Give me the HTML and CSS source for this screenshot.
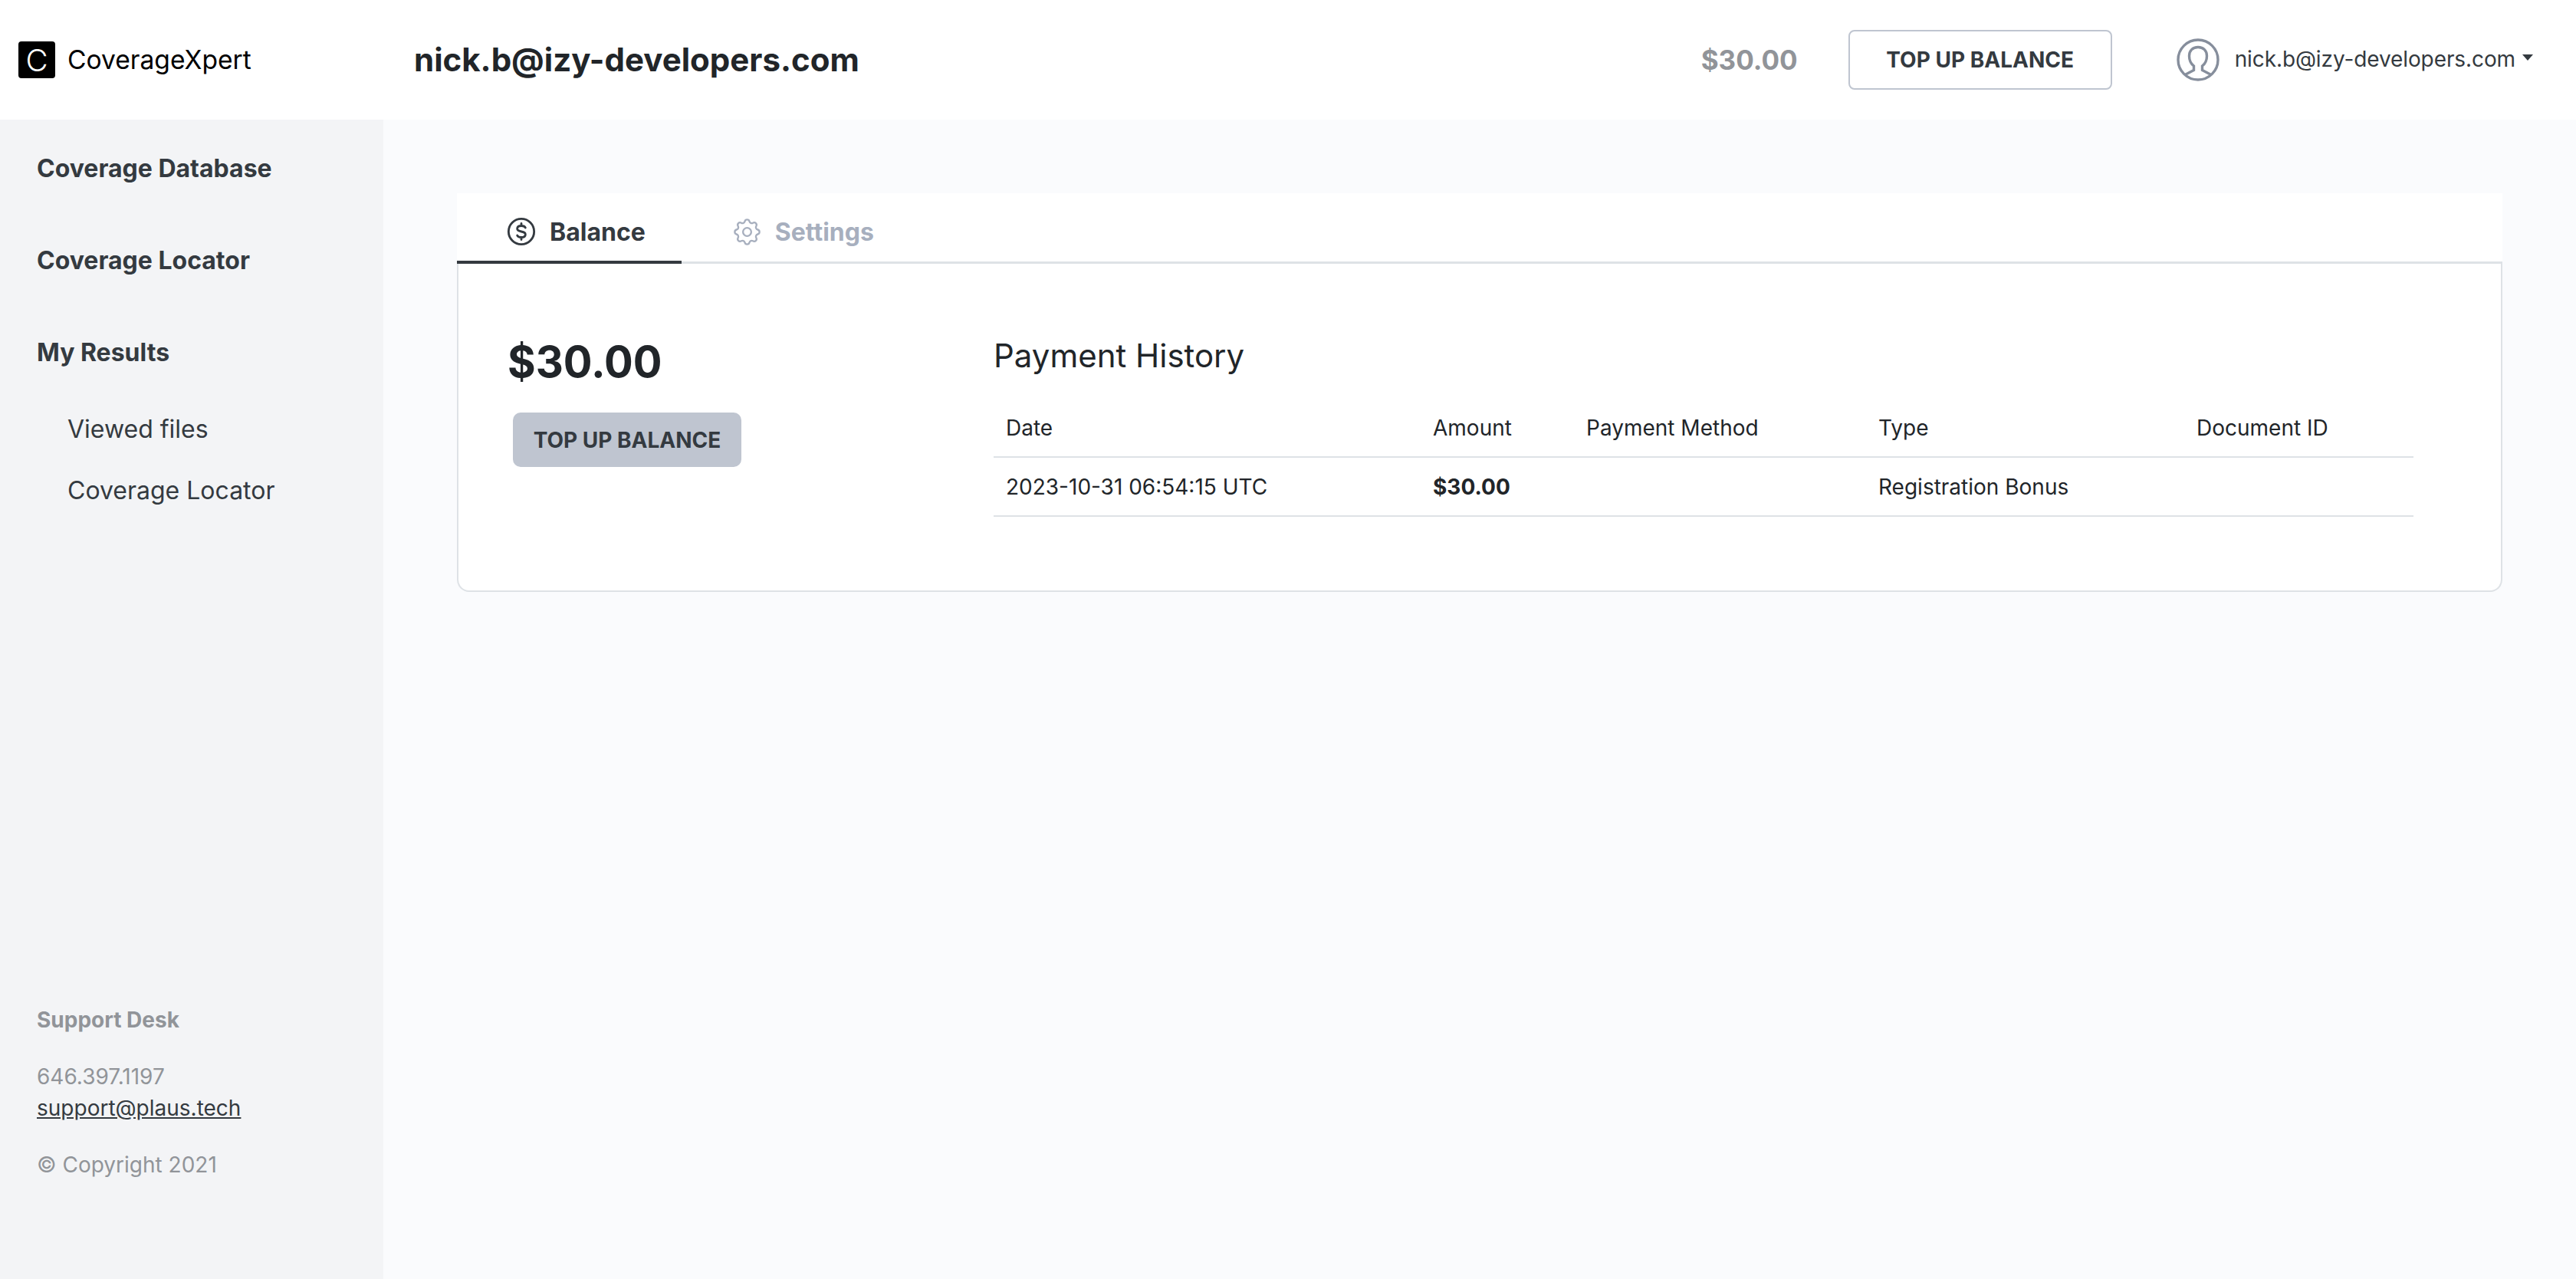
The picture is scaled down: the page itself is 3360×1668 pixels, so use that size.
FILE: index.html
```html
<!DOCTYPE html>
<html lang="en">
<head>
    <meta charset="UTF-8">
    <title>CoverageXpert</title>
    <link rel="stylesheet" href="styles.css">
</head>
<body>
    <header class="topbar">
        <div class="brand">
            <span class="brand-mark">C</span>
            <span class="brand-name">CoverageXpert</span>
        </div>
        <h1 class="page-title">nick.b@izy-developers.com</h1>
        <div class="topbar-right">
            <span class="top-balance">$30.00</span>
            <a class="btn-outline">TOP UP BALANCE</a>
            <svg class="user-icon" viewBox="0 0 56 56" fill="none" stroke="#868e9c" stroke-width="3.4">
                <circle cx="28" cy="28" r="26"/>
                <path d="M11 47.500L22.500 41.500V36C18.500 33 16.500 28 16.500 23C16.500 16 21 11.500 28 11.500C35 11.500 39.500 16 39.500 23C39.500 28 37.500 33 33.500 36V41.500L45 47.500"/>
            </svg>
            <span class="user-name">nick.b@izy-developers.com</span>
            <span class="caret"></span>
        </div>
    </header>

    <div class="layout">
        <aside class="sidebar">
            <nav class="side-nav">
                <a class="nav-item">Coverage Database</a>
                <a class="nav-item">Coverage Locator</a>
                <a class="nav-item">My Results</a>
                <a class="nav-sub">Viewed files</a>
                <a class="nav-sub">Coverage Locator</a>
            </nav>
            <div class="support">
                <div class="support-title">Support Desk</div>
                <div class="support-phone">646.397.1197</div>
                <a class="support-mail">support@plaus.tech</a>
                <div class="support-copy">© Copyright 2021</div>
            </div>
        </aside>

        <main class="content">
            <div class="tabs">
                <a class="tab tab-active">
                    <svg class="tab-icon" viewBox="0 0 24 24" fill="none" stroke="currentColor" stroke-width="1.7" stroke-linecap="round" stroke-linejoin="round">
                        <circle cx="12" cy="12" r="10"/>
                        <path d="M15.200 9C14.800 8 13.700 7.500 12 7.500C10 7.500 8.800 8.300 8.800 9.800C8.800 13 15.200 11 15.200 14.200C15.200 15.700 14 16.500 12 16.500C10.300 16.500 9.200 16 8.800 15M12 5.700V7.500M12 16.500V18.300"/>
                    </svg>
                    Balance
                </a>
                <a class="tab">
                    <svg class="tab-icon tab-icon-gear" viewBox="0 0 24 24" fill="none" stroke="currentColor" stroke-width="1.3" stroke-linecap="round" stroke-linejoin="round">
                        <path d="M10.325 4.317c.426-1.756 2.924-1.756 3.35 0a1.724 1.724 0 002.573 1.066c1.543-.94 3.31.826 2.37 2.37a1.724 1.724 0 001.065 2.572c1.756.426 1.756 2.924 0 3.35a1.724 1.724 0 00-1.066 2.573c.94 1.543-.826 3.31-2.37 2.37a1.724 1.724 0 00-2.572 1.065c-.426 1.756-2.924 1.756-3.35 0a1.724 1.724 0 00-2.573-1.066c-1.543.94-3.31-.826-2.37-2.37a1.724 1.724 0 00-1.065-2.572c-1.756-.426-1.756-2.924 0-3.35a1.724 1.724 0 001.066-2.573c-.94-1.543.826-3.31 2.37-2.37.996.608 2.296.07 2.572-1.065z"/>
                        <circle cx="12" cy="12" r="3"/>
                    </svg>
                    Settings
                </a>
            </div>
            <section class="card">
                <div class="balance-col">
                    <div class="balance-amount">$30.00</div>
                    <a class="btn-solid">TOP UP BALANCE</a>
                </div>
                <div class="history">
                    <h2 class="history-title">Payment History</h2>
                    <table class="history-table">
                        <thead>
                            <tr>
                                <th class="col-date">Date</th>
                                <th class="col-amount">Amount</th>
                                <th class="col-method">Payment Method</th>
                                <th class="col-type">Type</th>
                                <th>Document ID</th>
                            </tr>
                        </thead>
                        <tbody>
                            <tr>
                                <td>2023-10-31 06:54:15 UTC</td>
                                <td class="cell-bold">$30.00</td>
                                <td></td>
                                <td>Registration Bonus</td>
                                <td></td>
                            </tr>
                        </tbody>
                    </table>
                </div>
            </section>
        </main>
    </div>
</body>
</html>
```

FILE: styles.css
```css
* {
    box-sizing: border-box;
}

html, body {
    height: 100%;
}

body {
    margin: 0;
    display: flex;
    flex-direction: column;
    font-family: Inter, "Noto Sans", sans-serif;
    color: #343a40;
    background-color: #fafbfd;
}

a {
    color: inherit;
}

/* top bar */
.topbar {
    display: flex;
    align-items: center;
    height: 156px;
    flex-shrink: 0;
    background-color: #fff;
}

.brand {
    display: flex;
    align-items: center;
    width: 540px;
    padding-left: 24px;
}

.brand-mark {
    display: flex;
    align-items: center;
    justify-content: center;
    width: 48px;
    height: 48px;
    border-radius: 4px;
    background-color: #000;
    color: #fff;
    font-size: 40px;
    font-weight: 300;
}

.brand-name {
    margin-left: 16px;
    margin-bottom: 2px;
    font-size: 33.6px;
    color: #000;
}

.page-title {
    margin: 0 0 2px;
    font-size: 42px;
    font-weight: 700;
    color: #212529;
}

.topbar-right {
    display: flex;
    align-items: center;
    margin-left: auto;
    padding-right: 56px;
}

.top-balance {
    font-size: 35px;
    font-weight: 700;
    color: #919499;
}

.btn-outline {
    display: flex;
    align-items: center;
    justify-content: center;
    width: 344px;
    height: 78px;
    margin-left: 66px;
    border: 2px solid #bfc5d0;
    border-radius: 8px;
    font-size: 28px;
    font-weight: 700;
}

.user-icon {
    width: 56px;
    height: 56px;
    margin-left: 84px;
}

.user-name {
    margin-left: 20px;
    margin-bottom: 2px;
    font-size: 28px;
    letter-spacing: -0.1px;
}

.caret {
    width: 0;
    height: 0;
    margin-left: 9px;
    margin-bottom: 6px;
    border-left: 7px solid transparent;
    border-right: 7px solid transparent;
    border-top: 8px solid #343a40;
}

/* sidebar */
.layout {
    display: flex;
    flex: 1;
    min-height: 0;
}

.sidebar {
    display: flex;
    flex-direction: column;
    justify-content: space-between;
    width: 500px;
    padding: 44px 0 131px 48px;
    background-color: #f3f4f6;
}

.side-nav {
    display: flex;
    flex-direction: column;
}

.nav-item {
    height: 40px;
    margin-bottom: 80px;
    font-size: 32px;
    line-height: 40px;
    font-weight: 700;
}

.nav-sub {
    height: 40px;
    margin-left: 40px;
    margin-bottom: 40px;
    font-size: 32px;
    line-height: 40px;
}

.nav-item:nth-child(3) {
    margin-bottom: 60px;
}

.support {
    font-size: 28px;
    line-height: 36px;
    color: #919499;
}

.support-title {
    margin-bottom: 38px;
    font-weight: 700;
}

.support-phone {
    margin-bottom: 5px;
}

.support-mail {
    display: block;
    color: #343a40;
    text-decoration: underline;
}

.support-copy {
    margin-top: 38px;
}

/* tabs and card */
.content {
    flex: 1;
    padding: 96px 96px 0 96px;
}

.tabs {
    display: flex;
    height: 92px;
    background-color: #fff;
    border-bottom: 3px solid #dee2e6;
}

.tab {
    display: flex;
    align-items: center;
    height: 92px;
    padding: 8px 47px 0 64px;
    font-size: 32px;
    font-weight: 700;
    color: #a7afbe;
}

.tab-active {
    padding-top: 12px;
    color: #343a40;
    border-bottom: 4px solid #343a40;
}

.tab-icon {
    width: 40px;
    height: 40px;
    margin-right: 17px;
}

.tab-icon-gear {
    width: 43px;
    height: 43px;
    margin-right: 15px;
}

.card {
    display: flex;
    height: 428px;
    padding: 94px 114px 0 64px;
    background-color: #fff;
    border: 2px solid #dee2e6;
    border-top: none;
    border-radius: 0 0 16px 16px;
}

.balance-col {
    width: 634px;
}

.balance-amount {
    margin-top: -2px;
    font-size: 56px;
    line-height: 72px;
    font-weight: 700;
    color: #212529;
}

.btn-solid {
    display: flex;
    align-items: center;
    justify-content: center;
    width: 298px;
    height: 71px;
    margin-top: 30px;
    margin-left: 7px;
    border-radius: 10px;
    background-color: #bfc5d0;
    font-size: 28px;
    font-weight: 700;
}

.history {
    flex: 1;
}

.history-title {
    margin: 0 0 30px;
    font-size: 42px;
    line-height: 52px;
    font-weight: 400;
    color: #212529;
}

.history-table {
    width: 100%;
    border-collapse: collapse;
    table-layout: fixed;
    font-size: 28px;
    color: #212529;
}

.history-table th, .history-table td {
    height: 76px;
    padding: 0 16px;
    text-align: left;
    font-weight: 400;
    border-bottom: 2px solid #dee2e6;
}

.history-table td {
    height: 77px;
}

.col-date {
    width: 557px;
}

.col-amount {
    width: 200px;
}

.col-method {
    width: 381px;
}

.col-type {
    width: 415px;
}

.history-table .cell-bold {
    font-weight: 700;
}
```
